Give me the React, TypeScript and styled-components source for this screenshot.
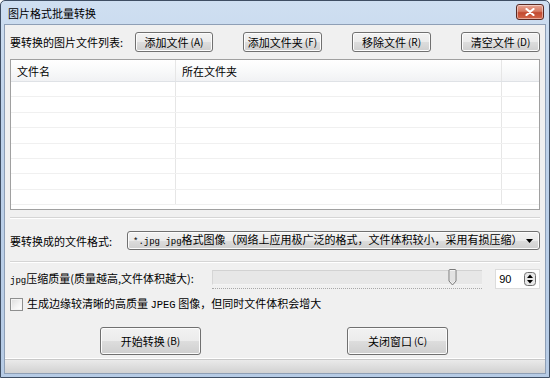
import React from "react";
import styled, { createGlobalStyle } from "styled-components";

const Global = createGlobalStyle`
  html, body { margin: 0; padding: 0; background: #ffffff; }
  body { font-family: "Noto Sans CJK SC", "Liberation Sans", sans-serif; font-size: 11px; color: #000; }
  * { box-sizing: border-box; }
`;

const Window = styled.div`
  width: 550px;
  height: 378px;
  border: 1px solid #3f4e63;
  border-radius: 5px 5px 0 0;
  background: linear-gradient(180deg, #cfdff1 0%, #bed2ea 30%, #b6cbe5 100%);
  padding: 0 3px 3px 3px;
  display: flex;
  flex-direction: column;
`;

const TitleBar = styled.div`
  height: 23px;
  display: flex;
  align-items: center;
  justify-content: space-between;
  padding: 0 2px 0 4px;
`;

const Title = styled.span`
  font-size: 11px;
  line-height: 14px;
  color: #000;
`;

const CloseBtn = styled.div`
  width: 28px;
  height: 16px;
  margin-top: -2px;
  border: 1px solid #5a2a24;
  border-radius: 3px;
  background: linear-gradient(180deg, #e8a493 0%, #d67a62 45%, #c24a30 55%, #d4674a 100%);
  box-shadow: inset 0 0 0 1px rgba(255, 255, 255, 0.45);
  display: flex;
  align-items: center;
  justify-content: center;
`;

const Client = styled.div`
  flex: 1;
  background: #f0f0f0;
  border: 1px solid #8e9fb6;
  display: flex;
  flex-direction: column;
`;

const Body = styled.div`
  padding: 0 5px 0 5px;
  display: flex;
  flex-direction: column;
`;

const Row = styled.div<{ $mt: number; $h?: number }>`
  display: flex;
  align-items: center;
  margin-top: ${(p) => p.$mt}px;
  ${(p) => (p.$h ? `height: ${p.$h}px;` : "")}
`;

const Label = styled.span<{ $w: number }>`
  width: ${(p) => p.$w}px;
  flex-shrink: 0;
  line-height: 14px;
  white-space: nowrap;
`;

const Text = styled.span`
  line-height: 14px;
  white-space: nowrap;
`;

const ButtonGroup = styled.div`
  flex: 1;
  display: flex;
  justify-content: space-between;
`;

const Button = styled.div<{ $w: number; $h: number }>`
  width: ${(p) => p.$w}px;
  height: ${(p) => p.$h}px;
  border: 1px solid #707070;
  border-radius: 3px;
  background: linear-gradient(180deg, #f2f2f2 0%, #ebebeb 50%, #dddddd 51%, #cfcfcf 100%);
  box-shadow: inset 0 0 0 1px #fcfcfc;
  display: flex;
  align-items: center;
  justify-content: center;
  line-height: 14px;
  white-space: nowrap;
`;

const Key = styled.span`
  font-size: 10px;
  margin-left: 2px;
`;

const List = styled.div`
  margin-top: 7px;
  height: 151px;
  border: 1px solid #a0a0a0;
  background: #ffffff;
  display: flex;
  flex-direction: column;
  overflow: hidden;
`;

const Header = styled.div`
  height: 22px;
  display: flex;
  background: linear-gradient(180deg, #ffffff 0%, #f7f8f9 60%, #f1f2f4 100%);
  border-bottom: 1px solid #dfe2e6;
`;

const Cell = styled.div<{ $w?: number; $last?: boolean }>`
  ${(p) => (p.$w ? `width: ${p.$w}px; flex-shrink: 0;` : "flex: 1;")}
  border-right: ${(p) => (p.$last ? "none" : "1px solid #e6e6e6")};
  padding-left: 6px;
  display: flex;
  align-items: center;
  line-height: 14px;
`;

const DataRow = styled.div`
  height: 15.4px;
  display: flex;
  border-bottom: 1px solid #f0f0f0;
`;

const Separator = styled.div<{ $mt: number }>`
  margin-top: ${(p) => p.$mt}px;
  height: 2px;
  border-top: 1px solid #d5d5d5;
  border-bottom: 1px solid #ffffff;
`;

const Combo = styled.div`
  flex: 1;
  min-width: 0;
  overflow: hidden;
  height: 19px;
  margin-left: 2px;
  border: 1px solid #707070;
  border-radius: 3px;
  background: linear-gradient(180deg, #f2f2f2 0%, #ebebeb 50%, #dddddd 51%, #cfcfcf 100%);
  box-shadow: inset 0 0 0 1px #fcfcfc;
  display: flex;
  align-items: center;
  justify-content: space-between;
  padding: 0 6px 0 5px;
  white-space: nowrap;
  line-height: 14px;
`;

const Mono = styled.span<{ $size?: number }>`
  font-family: "Liberation Mono", "DejaVu Sans Mono", monospace;
  font-size: ${(p) => p.$size ?? 9}px;
`;

const SliderWrap = styled.div`
  width: 271px;
  margin-left: 12px;
  display: flex;
  flex-direction: column;
  position: relative;
`;

const Track = styled.div`
  height: 15px;
  background: #e7e7e7;
  border-top: 1px solid #d2d2d2;
  border-left: 1px solid #d6d6d6;
  border-bottom: 1px solid #f4f4f4;
`;

const Ticks = styled.div`
  margin-top: 3px;
  height: 1px;
  border-top: 1px dotted #a8a8a8;
`;

const Thumb = styled.svg`
  position: absolute;
  left: 236px;
  top: -1px;
`;

const Spin = styled.div`
  width: 45px;
  height: 20px;
  margin-left: 13px;
  background: #ffffff;
  border: 1px solid #dcdcdc;
  display: flex;
  align-items: center;
  justify-content: space-between;
  padding: 0 3px 0 3px;
  font-family: "Liberation Sans", sans-serif;
  font-size: 11px;
`;

const CheckBox = styled.div`
  width: 13px;
  height: 13px;
  border: 1px solid #8e8f8f;
  background: linear-gradient(135deg, #dcdcdc 0%, #f4f4f4 60%, #ffffff 100%);
  box-shadow: inset 0 0 0 1px #f4f4f4;
  margin-right: 4px;
  flex-shrink: 0;
`;

const BottomRow = styled.div`
  margin-top: 16px;
  display: flex;
  justify-content: center;
  gap: 146px;
  padding-right: 2px;
`;

const StatusBar = styled.div`
  margin-top: auto;
  height: 15px;
  border-top: 1px solid #ffffff;
  background: linear-gradient(180deg, #ececec 0%, #dcdcdc 60%, #d2d2d2 100%);
  box-shadow: inset 0 1px 0 #c8c8c8;
`;

const rows = Array.from({ length: 8 });

export default function App() {
  return (
    <>
      <Global />
      <Window>
        <TitleBar>
          <Title>图片格式批量转换</Title>
          <CloseBtn>
            <svg width="10" height="8" viewBox="0 0 10 8">
              <path d="M1.5 1 L8.5 7 M8.5 1 L1.5 7" stroke="#ffffff" strokeWidth="2.2" strokeLinecap="round" />
            </svg>
          </CloseBtn>
        </TitleBar>
        <Client>
          <Body>
            <Row $mt={7} $h={20}>
              <Label $w={125}>要转换的图片文件列表:</Label>
              <ButtonGroup>
                <Button $w={78} $h={20}>添加文件<Key>(A)</Key></Button>
                <Button $w={79} $h={20}>添加文件夹<Key>(F)</Key></Button>
                <Button $w={79} $h={20}>移除文件<Key>(R)</Key></Button>
                <Button $w={79} $h={20}>清空文件<Key>(D)</Key></Button>
              </ButtonGroup>
            </Row>
            <List>
              <Header>
                <Cell $w={165}>文件名</Cell>
                <Cell $w={326}>所在文件夹</Cell>
                <Cell $last />
              </Header>
              {rows.map((_, i) => (
                <DataRow key={i}>
                  <Cell $w={165} />
                  <Cell $w={326} />
                  <Cell $last />
                </DataRow>
              ))}
            </List>
            <Separator $mt={7} />
            <Row $mt={12} $h={19}>
              <Label $w={115}>要转换成的文件格式:</Label>
              <Combo>
                <Text>
                  <Mono>*.jpg jpg</Mono>格式图像（网络上应用极广泛的格式，文件体积较小，采用有损压缩）
                </Text>
                <svg width="7" height="4" viewBox="0 0 7 4">
                  <path d="M0 0 H7 L3.5 4 Z" fill="#000" />
                </svg>
              </Combo>
            </Row>
            <Separator $mt={11} />
            <Row $mt={6} $h={20}>
              <Label $w={190}>
                <Mono>jpg</Mono>压缩质量(质量越高,文件体积越大):
              </Label>
              <SliderWrap>
                <Track />
                <Ticks />
                <Thumb width="9" height="17" viewBox="0 0 9 17">
                  <path
                    d="M1 1.5 Q1 0.5 2 0.5 H7 Q8 0.5 8 1.5 V12 L4.5 16 L1 12 Z"
                    fill="#f4f4f4"
                    stroke="#7a7a7a"
                    strokeWidth="1"
                  />
                  <path d="M2 2 H7 V11.5 L4.5 14.5 L2 11.5 Z" fill="#e2e2e2" />
                </Thumb>
              </SliderWrap>
              <Spin>
                <span>90</span>
                <svg width="12" height="14" viewBox="0 0 12 14">
                  <rect x="0.5" y="0.5" width="11" height="13" rx="3" fill="#e8e8e8" stroke="#707070" />
                  <path d="M3 6 L6 2.5 L9 6 Z" fill="#000" />
                  <path d="M3 8 L6 11.5 L9 8 Z" fill="#000" />
                </svg>
              </Spin>
            </Row>
            <Row $mt={8} $h={14}>
              <CheckBox />
              <Text>
                生成边缘较清晰的高质量 <Mono $size={10.5}>JPEG</Mono> 图像，但同时文件体积会增大
              </Text>
            </Row>
            <BottomRow>
              <Button $w={101} $h={28}>开始转换<Key>(B)</Key></Button>
              <Button $w={101} $h={28}>关闭窗口<Key>(C)</Key></Button>
            </BottomRow>
          </Body>
          <StatusBar />
        </Client>
      </Window>
    </>
  );
}
